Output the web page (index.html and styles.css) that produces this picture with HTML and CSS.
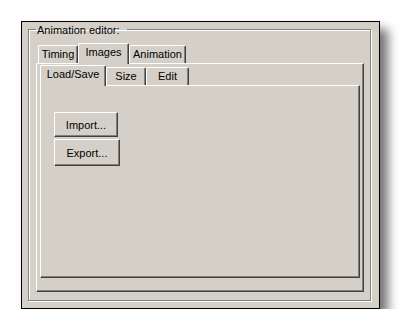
FILE: index.html
```html
<!DOCTYPE html>
<html lang="en">
<head>
    <meta charset="UTF-8">
    <title>Animation editor</title>
    <link rel="stylesheet" href="styles.css">
</head>
<body>
<div class="window">
    <fieldset class="group">
        <legend>Animation editor:</legend>

        <!-- Внешние вкладки -->
        <div class="tabs tabs-outer">
            <div class="tab-row">
                <div class="tab tab-timing">Timing</div>
                <div class="tab tab-images active">Images</div>
                <div class="tab tab-animation">Animation</div>
            </div>
            <div class="tab-panel">

                <!-- Вложенные вкладки -->
                <div class="tabs tabs-inner">
                    <div class="tab-row">
                        <div class="tab tab-load active">Load/Save</div>
                        <div class="tab tab-size">Size</div>
                        <div class="tab tab-edit">Edit</div>
                    </div>
                    <div class="tab-panel">
                        <button class="btn btn-import">Import...</button>
                        <button class="btn btn-export">Export...</button>
                    </div>
                </div>

            </div>
        </div>
    </fieldset>
</div>
</body>
</html>
```

FILE: styles.css
```css
body {
    margin: 0;
    padding: 21px 0 0 21px;
    background: #fff;
    font-family: 'Liberation Sans', Arial, sans-serif;
    font-size: 11px;
    color: #000;
}

/* Окно */
.window {
    box-sizing: border-box;
    width: 359px;
    height: 288px;
    padding: 0 8px 7px 6px;
    background: #d4d0c8;
    border: 1px solid #000;
    box-shadow: 8px 8px 10px rgba(0, 0, 0, 0.55);
}

/* Рамка группы */
.group {
    box-sizing: border-box;
    height: 279px;
    min-width: 0;
    margin: 0;
    padding: 6px 6px 8px 7px;
    border: 1px solid #808080;
    box-shadow: inset 1px 1px #fff, 1px 1px #fff;
}

.group legend {
    box-sizing: border-box;
    width: 91px;
    padding: 2px 0 0 1px;
    line-height: 13px;
    white-space: nowrap;
}

/* Вкладки */
.tabs {
    display: flex;
    flex-direction: column;
}

.tabs-outer {
    height: 249px;
}

.tabs-inner {
    height: 213px;
}

.tab-row {
    display: flex;
    align-items: flex-end;
    height: 20px;
}

.tabs-outer > .tab-row {
    padding-left: 2px;
}

.tab {
    box-sizing: border-box;
    height: 18px;
    line-height: 16px;
    text-align: center;
    white-space: nowrap;
    border-top: 1px solid #fff;
    border-left: 1px solid #fff;
    border-right: 1px solid #404040;
    border-radius: 2px 2px 0 0;
    box-shadow: inset -1px 0 #808080;
    background: #d4d0c8;
}

.tab.active {
    position: relative;
    z-index: 1;
    height: 21px;
    margin-bottom: -1px;
}

.tab-timing { width: 40px; }
.tab-images { width: 51px; }
.tab-animation { width: 57px; }
.tab-load { width: 66px; }
.tab-size { width: 40px; }
.tab-edit { width: 43px; }

.tab-panel {
    flex: 1;
    border: 1px solid;
    border-color: #fff #404040 #404040 #fff;
    box-shadow: inset -1px -1px #808080;
}

.tabs-outer > .tab-panel {
    padding: 1px 3px 13px 3px;
}

.tabs-inner > .tab-panel {
    display: flex;
    flex-direction: column;
    align-items: flex-start;
    gap: 2px;
    padding: 26px 0 0 13px;
}

/* Кнопки */
.btn {
    box-sizing: border-box;
    padding: 0;
    font-family: inherit;
    font-size: 11px;
    color: #000;
    background: #d4d0c8;
    border: 1px solid;
    border-color: #fff #404040 #404040 #fff;
    border-radius: 0;
    box-shadow: inset -1px -1px #808080;
}

.btn-import {
    width: 64px;
    height: 25px;
}

.btn-export {
    width: 66px;
    height: 27px;
}
```
